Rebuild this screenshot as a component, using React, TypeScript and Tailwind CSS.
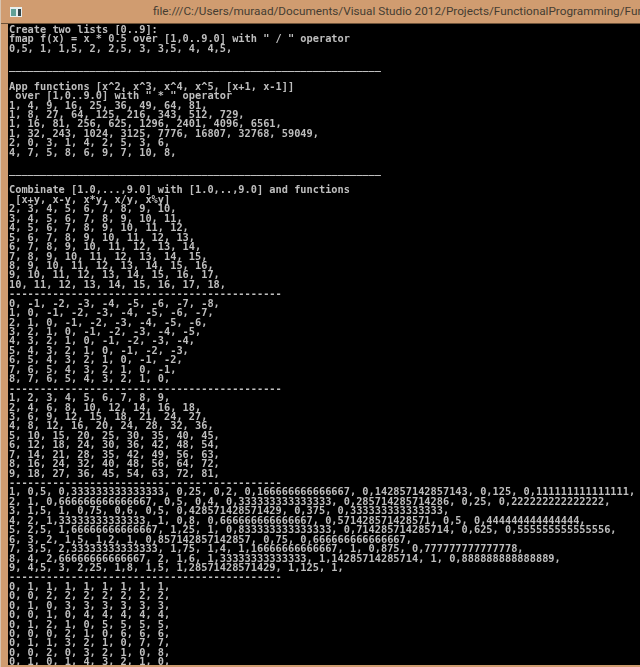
const lines = [
  'Create two lists [0..9]:',
  'fmap f(x) = x * 0.5 over [1,0..9.0] with " / " operator',
  '0,5, 1, 1,5, 2, 2,5, 3, 3,5, 4, 4,5,',
  '',
  '____________________________________________________________',
  '',
  'App functions [x^2, x^3, x^4, x^5, [x+1, x-1]]',
  ' over [1,0..9.0] with " * " operator',
  '1, 4, 9, 16, 25, 36, 49, 64, 81,',
  '1, 8, 27, 64, 125, 216, 343, 512, 729,',
  '1, 16, 81, 256, 625, 1296, 2401, 4096, 6561,',
  '1, 32, 243, 1024, 3125, 7776, 16807, 32768, 59049,',
  '2, 0, 3, 1, 4, 2, 5, 3, 6,',
  '4, 7, 5, 8, 6, 9, 7, 10, 8,',
  '',
  '____________________________________________________________',
  '',
  'Combinate [1.0,...,9.0] with [1.0,..,9.0] and functions',
  ' [x+y, x-y, x*y, x/y, x%y]',
  '2, 3, 4, 5, 6, 7, 8, 9, 10,',
  '3, 4, 5, 6, 7, 8, 9, 10, 11,',
  '4, 5, 6, 7, 8, 9, 10, 11, 12,',
  '5, 6, 7, 8, 9, 10, 11, 12, 13,',
  '6, 7, 8, 9, 10, 11, 12, 13, 14,',
  '7, 8, 9, 10, 11, 12, 13, 14, 15,',
  '8, 9, 10, 11, 12, 13, 14, 15, 16,',
  '9, 10, 11, 12, 13, 14, 15, 16, 17,',
  '10, 11, 12, 13, 14, 15, 16, 17, 18,',
  '--------------------------------------------',
  '0, -1, -2, -3, -4, -5, -6, -7, -8,',
  '1, 0, -1, -2, -3, -4, -5, -6, -7,',
  '2, 1, 0, -1, -2, -3, -4, -5, -6,',
  '3, 2, 1, 0, -1, -2, -3, -4, -5,',
  '4, 3, 2, 1, 0, -1, -2, -3, -4,',
  '5, 4, 3, 2, 1, 0, -1, -2, -3,',
  '6, 5, 4, 3, 2, 1, 0, -1, -2,',
  '7, 6, 5, 4, 3, 2, 1, 0, -1,',
  '8, 7, 6, 5, 4, 3, 2, 1, 0,',
  '--------------------------------------------',
  '1, 2, 3, 4, 5, 6, 7, 8, 9,',
  '2, 4, 6, 8, 10, 12, 14, 16, 18,',
  '3, 6, 9, 12, 15, 18, 21, 24, 27,',
  '4, 8, 12, 16, 20, 24, 28, 32, 36,',
  '5, 10, 15, 20, 25, 30, 35, 40, 45,',
  '6, 12, 18, 24, 30, 36, 42, 48, 54,',
  '7, 14, 21, 28, 35, 42, 49, 56, 63,',
  '8, 16, 24, 32, 40, 48, 56, 64, 72,',
  '9, 18, 27, 36, 45, 54, 63, 72, 81,',
  '--------------------------------------------',
  '1, 0,5, 0,333333333333333, 0,25, 0,2, 0,166666666666667, 0,142857142857143, 0,125, 0,111111111111111,',
  '2, 1, 0,666666666666667, 0,5, 0,4, 0,333333333333333, 0,285714285714286, 0,25, 0,222222222222222,',
  '3, 1,5, 1, 0,75, 0,6, 0,5, 0,428571428571429, 0,375, 0,333333333333333,',
  '4, 2, 1,33333333333333, 1, 0,8, 0,666666666666667, 0,571428571428571, 0,5, 0,444444444444444,',
  '5, 2,5, 1,66666666666667, 1,25, 1, 0,833333333333333, 0,714285714285714, 0,625, 0,555555555555556,',
  '6, 3, 2, 1,5, 1,2, 1, 0,857142857142857, 0,75, 0,666666666666667,',
  '7, 3,5, 2,33333333333333, 1,75, 1,4, 1,16666666666667, 1, 0,875, 0,777777777777778,',
  '8, 4, 2,66666666666667, 2, 1,6, 1,33333333333333, 1,14285714285714, 1, 0,888888888888889,',
  '9, 4,5, 3, 2,25, 1,8, 1,5, 1,28571428571429, 1,125, 1,',
  '--------------------------------------------',
  '0, 1, 1, 1, 1, 1, 1, 1, 1,',
  '0, 0, 2, 2, 2, 2, 2, 2, 2,',
  '0, 1, 0, 3, 3, 3, 3, 3, 3,',
  '0, 0, 1, 0, 4, 4, 4, 4, 4,',
  '0, 1, 2, 1, 0, 5, 5, 5, 5,',
  '0, 0, 0, 2, 1, 0, 6, 6, 6,',
  '0, 1, 1, 3, 2, 1, 0, 7, 7,',
  '0, 0, 2, 0, 3, 2, 1, 0, 8,',
  '0, 1, 0, 1, 4, 3, 2, 1, 0,',
];

export default function App() {
  return (
    <div className="flex flex-col w-[640px] h-[667px] overflow-hidden bg-[#d09c70] border-l border-[#d8c4b0]">
      <div className="flex items-center h-6 shrink-0 pl-[9px] border-b border-[#6d5238]">
        <svg width="12" height="10" viewBox="0 0 12 10" className="shrink-0">
          <rect width="12" height="10" fill="#e6eeee" />
          <rect x="1" y="2" width="5" height="7" fill="#5f9f95" />
          <rect x="8" y="2" width="3" height="7" fill="#33454a" />
        </svg>
        <div className="ml-[131px] whitespace-nowrap text-[11.75px] text-[#453c32] font-['Roboto',sans-serif]">
          file:///C:/Users/muraad/Documents/Visual Studio 2012/Projects/FunctionalProgramming/Functional
        </div>
      </div>
      <div className="flex-1 ml-[7px] mb-[2px] bg-black overflow-hidden pl-px pt-px">
        <div className="font-['DejaVu_Sans_Mono',monospace] font-bold text-[10.3px] leading-[9.45px] text-[#bebebe] whitespace-pre blur-[0.3px]">
          {lines.map((line, i) => (
            <div key={i} className={line.startsWith('_') ? 'h-[9.45px] -translate-y-[2px]' : 'h-[9.45px]'}>{line}</div>
          ))}
        </div>
      </div>
    </div>
  );
}
